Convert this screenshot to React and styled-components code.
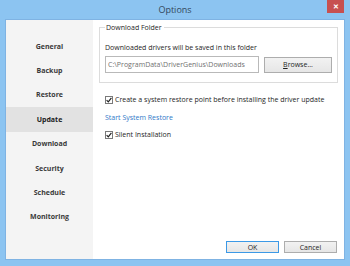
import styled, { createGlobalStyle } from 'styled-components';

const GlobalStyle = createGlobalStyle`
  html, body {
    margin: 0;
    padding: 0;
    background: #8cc4f1;
  }
  body {
    font-family: 'Open Sans', 'Noto Sans', sans-serif;
  }
`;

const Window = styled.div`
  width: 350px;
  height: 266px;
  background: #8cc4f1;
  display: flex;
  flex-direction: column;
  box-sizing: border-box;
`;

const TitleBar = styled.div`
  height: 19px;
  position: relative;
  display: flex;
  align-items: center;
  justify-content: center;
  flex-shrink: 0;
`;

const Title = styled.span`
  font-size: 9px;
  color: #33475b;
  margin-top: -1px;
`;

const CloseButton = styled.div`
  position: absolute;
  top: 0;
  right: 6px;
  width: 17px;
  height: 13px;
  background: #c75050;
  display: flex;
  align-items: center;
  justify-content: center;
  color: #fff;
  font-size: 7px;
  font-weight: bold;
`;

const Client = styled.div`
  margin: 0 5px 6px 5px;
  flex: 1;
  display: flex;
  background: #fff;
  border: 1px solid #7fb3e3;
  box-sizing: border-box;
  overflow: hidden;
`;

const Sidebar = styled.div`
  width: 90px;
  background: #f4f4f4;
  padding-top: 14px;
  display: flex;
  flex-direction: column;
`;

const NavItem = styled.div`
  height: 24.4px;
  display: flex;
  align-items: center;
  justify-content: center;
  font-size: 7px;
  font-weight: bold;
  color: ${p => (p.$active ? '#1c1c1c' : '#3a3a3a')};
  background: ${p => (p.$active ? '#e2e2e2' : 'transparent')};
`;

const Main = styled.div`
  flex: 1;
  padding: 3px 6px 6px 6px;
  display: flex;
  flex-direction: column;
  font-size: 7px;
  color: #1e1e1e;
`;

const Group = styled.fieldset`
  margin: 0;
  border: 1px solid #dcdcdc;
  padding: 11px 5px 9px 5px;
  display: flex;
  flex-direction: column;
  gap: 4px;
`;

const Legend = styled.legend`
  padding: 0 2px 0 1px;
  font-size: 7px;
  color: #1e1e1e;
`;

const Row = styled.div`
  display: flex;
  align-items: center;
  gap: 5px;
`;

const PathInput = styled.div`
  width: 150px;
  height: 15px;
  border: 1px solid #b9b9b9;
  box-sizing: content-box;
  display: flex;
  align-items: center;
  padding-left: 2px;
  color: #707070;
  background: #fff;
`;

const Button = styled.div`
  width: ${p => p.$w}px;
  height: ${p => p.$h}px;
  box-sizing: border-box;
  border: 1px solid ${p => (p.$default ? '#3c99e6' : '#adadad')};
  background: linear-gradient(#f2f2f2, #e6e6e6);
  display: flex;
  align-items: center;
  justify-content: center;
  color: #1e1e1e;
  font-size: 7px;
  u {
    text-decoration: underline;
  }
`;

const Options = styled.div`
  margin-top: 12px;
  padding-left: 6px;
  display: flex;
  flex-direction: column;
  gap: 8.5px;
`;

const CheckRow = styled.label`
  display: flex;
  align-items: center;
  gap: 2px;
`;

const Box = styled.span`
  width: 8px;
  height: 8px;
  box-sizing: border-box;
  border: 1px solid #7a7a7a;
  background: #fff;
  display: flex;
  align-items: center;
  justify-content: center;
`;

const Link = styled.a`
  color: #2f78c8;
  text-decoration: none;
`;

const Footer = styled.div`
  margin-top: auto;
  display: flex;
  justify-content: flex-end;
  gap: 5px;
  padding-right: 1px;
`;

function Check() {
  return (
    <Box>
      <svg width="6" height="6" viewBox="0 0 6 6">
        <path d="M0.6 3.1 L2.3 4.8 L5.4 0.8" stroke="#222" strokeWidth="1.2" fill="none" />
      </svg>
    </Box>
  );
}

const items = ['General', 'Backup', 'Restore', 'Update', 'Download', 'Security', 'Schedule', 'Monitoring'];

export default function App() {
  return (
    <>
      <GlobalStyle />
      <Window>
        <TitleBar>
          <Title>Options</Title>
          <CloseButton>✕</CloseButton>
        </TitleBar>
        <Client>
          <Sidebar>
            {items.map(name => (
              <NavItem key={name} $active={name === 'Update'}>{name}</NavItem>
            ))}
          </Sidebar>
          <Main>
            <Group>
              <Legend>Download Folder</Legend>
              <div>Downloaded drivers will be saved in this folder</div>
              <Row>
                <PathInput>C:\ProgramData\DriverGenius\Downloads</PathInput>
                <Button $w={68} $h={16}><span><u>B</u>rowse...</span></Button>
              </Row>
            </Group>
            <Options>
              <CheckRow><Check />Create a system restore point before installing the driver update</CheckRow>
              <Link href="#restore">Start System Restore</Link>
              <CheckRow><Check />Silent Installation</CheckRow>
            </Options>
            <Footer>
              <Button $w={53} $h={12} $default>OK</Button>
              <Button $w={53} $h={12}>Cancel</Button>
            </Footer>
          </Main>
        </Client>
      </Window>
    </>
  );
}
